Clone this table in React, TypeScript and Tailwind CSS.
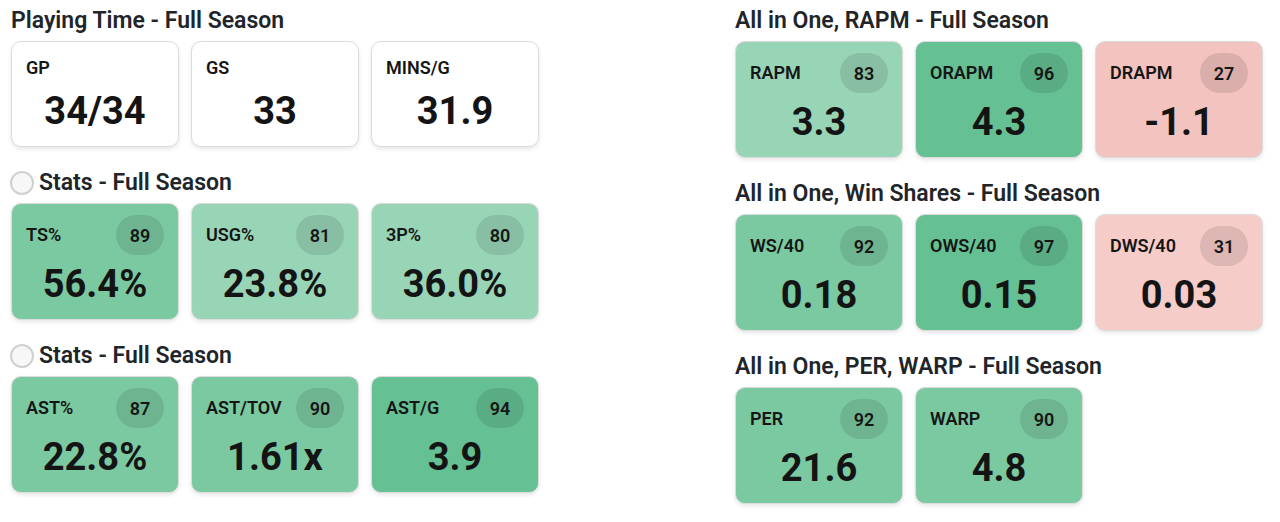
const FONT = "font-['Roboto','Liberation_Sans',sans-serif]";

type Stat = {
  label: string;
  value: string;
  pct?: number;
  bg?: string;
};

type Section = {
  title: string;
  toggle?: boolean;
  stats: Stat[];
};

const LIGHT = "bg-[#98d5b7]";
const MID = "bg-[#7bc9a1]";
const DARK = "bg-[#65c094]";
const RED = "bg-[#f3c3bf]";
const RED_SOFT = "bg-[#f5ccc8]";

const left: Section[] = [
  {
    title: "Playing Time - Full Season",
    stats: [
      { label: "GP", value: "34/34" },
      { label: "GS", value: "33" },
      { label: "MINS/G", value: "31.9" },
    ],
  },
  {
    title: "Stats - Full Season",
    toggle: true,
    stats: [
      { label: "TS%", value: "56.4%", pct: 89, bg: MID },
      { label: "USG%", value: "23.8%", pct: 81, bg: LIGHT },
      { label: "3P%", value: "36.0%", pct: 80, bg: LIGHT },
    ],
  },
  {
    title: "Stats - Full Season",
    toggle: true,
    stats: [
      { label: "AST%", value: "22.8%", pct: 87, bg: MID },
      { label: "AST/TOV", value: "1.61x", pct: 90, bg: MID },
      { label: "AST/G", value: "3.9", pct: 94, bg: DARK },
    ],
  },
];

const right: Section[] = [
  {
    title: "All in One, RAPM - Full Season",
    stats: [
      { label: "RAPM", value: "3.3", pct: 83, bg: LIGHT },
      { label: "ORAPM", value: "4.3", pct: 96, bg: DARK },
      { label: "DRAPM", value: "-1.1", pct: 27, bg: RED },
    ],
  },
  {
    title: "All in One, Win Shares - Full Season",
    stats: [
      { label: "WS/40", value: "0.18", pct: 92, bg: MID },
      { label: "OWS/40", value: "0.15", pct: 97, bg: DARK },
      { label: "DWS/40", value: "0.03", pct: 31, bg: RED_SOFT },
    ],
  },
  {
    title: "All in One, PER, WARP - Full Season",
    stats: [
      { label: "PER", value: "21.6", pct: 92, bg: MID },
      { label: "WARP", value: "4.8", pct: 90, bg: MID },
    ],
  },
];

function StatCard({ stat }: { stat: Stat }) {
  // cards without a percentile are plain white and a bit shorter
  if (stat.pct === undefined) {
    return (
      <div className="w-[168px] rounded-[10px] border border-[#dcdcdc] bg-white px-[14px] pt-[14px] pb-[15px] shadow-[0_2px_4px_rgba(0,0,0,0.1)]">
        <div className="text-[18px] leading-6 font-semibold text-[#161616]">{stat.label}</div>
        <div className="mt-[11px] text-center text-[38px] leading-10 font-bold text-[#141414]">
          {stat.value}
        </div>
      </div>
    );
  }
  return (
    <div
      className={`w-[168px] rounded-[10px] border border-[#dcdcdc] px-[14px] pt-[11px] pb-[15px] shadow-[0_2px_4px_rgba(0,0,0,0.1)] ${stat.bg}`}
    >
      <div className="flex h-10 items-center justify-between">
        <span className="text-[18px] leading-6 font-semibold text-[#161616]">{stat.label}</span>
        <span className="flex h-10 w-12 items-center justify-center rounded-full bg-black/10 text-[18px] font-semibold text-[#161616]">
          {stat.pct}
        </span>
      </div>
      <div className="mt-[9px] text-center text-[38px] leading-10 font-bold text-[#141414]">
        {stat.value}
      </div>
    </div>
  );
}

function StatSection({ section }: { section: Section }) {
  return (
    <section>
      <div className="mb-[6px] flex h-7 items-center gap-[5px]">
        {section.toggle && (
          <span className="ml-[-1px] h-6 w-6 rounded-full border-2 border-[#d0d0d0] bg-[#f7f7f7]" />
        )}
        <h2 className="text-[23px] leading-7 font-semibold text-[#212529]">{section.title}</h2>
      </div>
      <div className="flex gap-3">
        {section.stats.map((s) => (
          <StatCard key={s.label} stat={s} />
        ))}
      </div>
    </section>
  );
}

export default function App() {
  return (
    <div className={`${FONT} min-h-[522px] w-[1280px] bg-white pt-[7px] pl-[11px]`}>
      <div className="flex gap-[196px]">
        <div className="flex w-[528px] flex-col gap-[22px]">
          {left.map((s, i) => (
            <StatSection key={i} section={s} />
          ))}
        </div>
        <div className="flex w-[528px] flex-col gap-[22px]">
          {right.map((s, i) => (
            <StatSection key={i} section={s} />
          ))}
        </div>
      </div>
    </div>
  );
}
